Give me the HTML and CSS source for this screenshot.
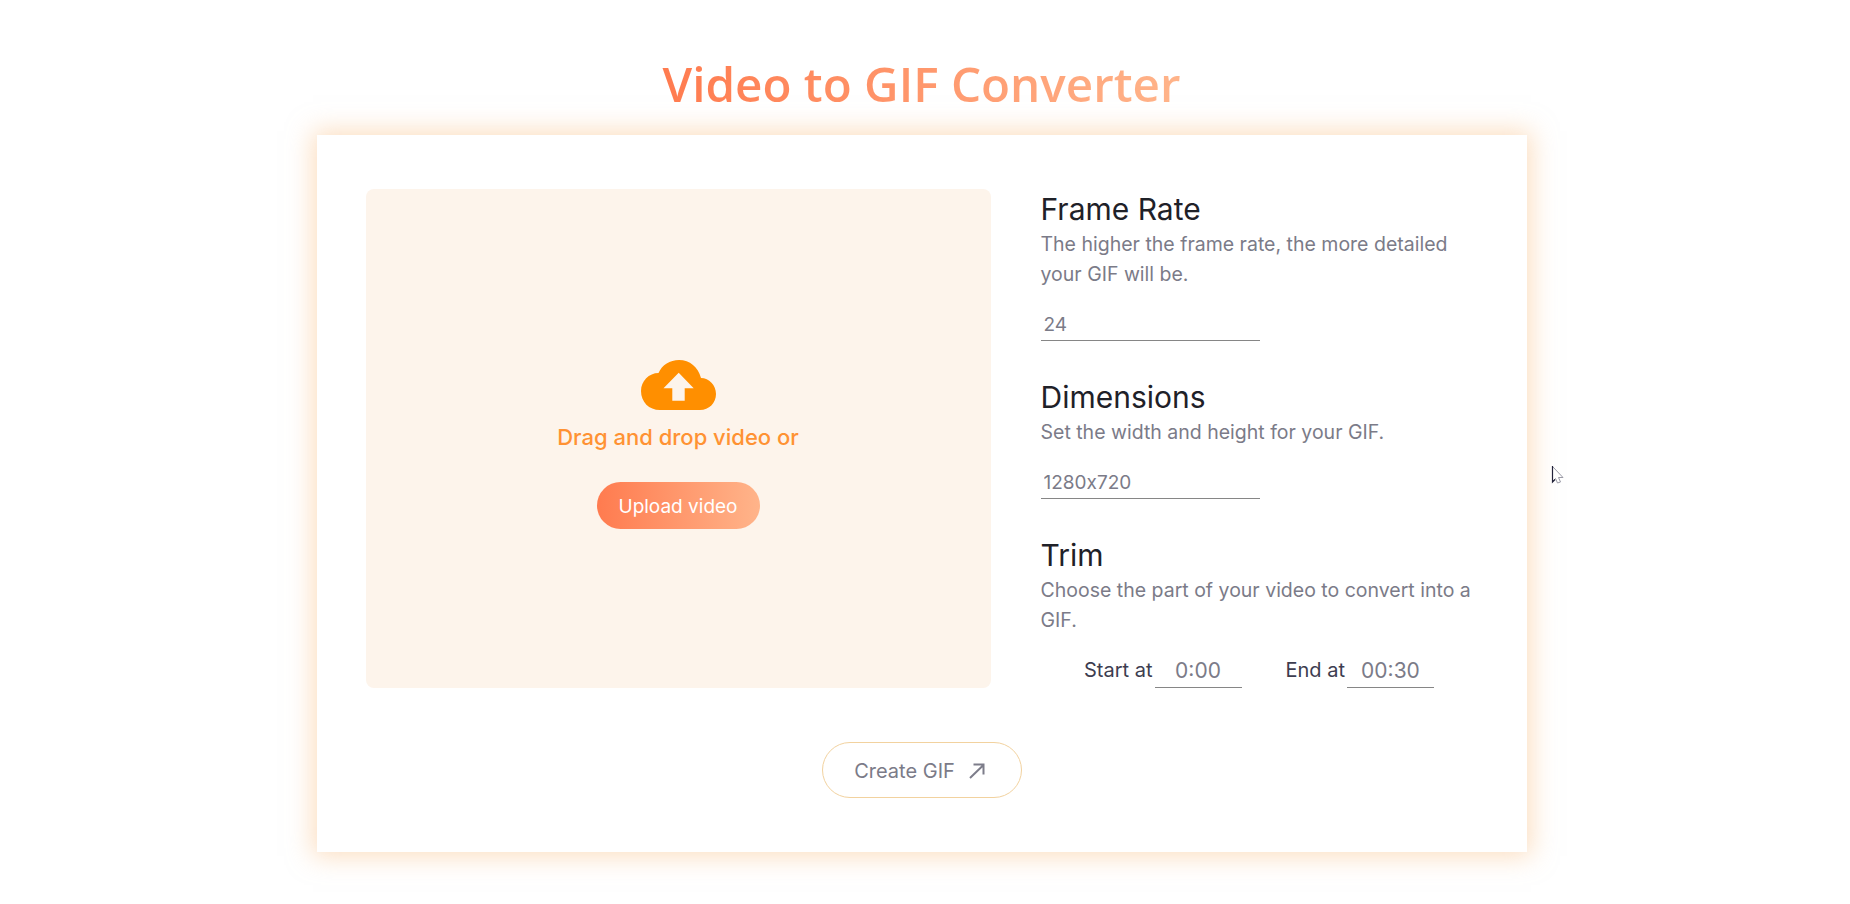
FILE: index.html
```html
<!DOCTYPE html>
<html lang="en">
<head>
    <meta charset="UTF-8">
    <title>Video to GIF Converter</title>

    <link rel="stylesheet" href="styles.css">
</head>
<body>
    <h1 class="title"><span>Video to GIF Converter</span></h1>

    <main class="card">
        <div class="columns">
            <div class="dropzone">
                <svg class="cloud" width="75" height="50" viewBox="0 0 75 50">
                    <path fill="#ff8f00" d="M19 50C8 50 0 42 0 31 0 21 8 13 17.500 13 21 5 29 0 38 0 49 0 57 7 60 18 68 18 75 25 75 34 75 43 68 50 59 50Z"/>
                    <path fill="#fdf4eb" d="M37.700 12.700 52.700 28.300H43.700V40.700H31.300V28.300H22.500Z"/>
                </svg>
                <p class="drop-text">Drag and drop video or</p>
                <button class="upload" type="button">Upload video</button>
            </div>

            <form class="settings">
                <section class="setting">
                    <h2>Frame Rate</h2>
                    <p>The higher the frame rate, the more detailed your GIF will be.</p>
                    <input class="field" type="text" placeholder="24">
                </section>
                <section class="setting">
                    <h2>Dimensions</h2>
                    <p>Set the width and height for your GIF.</p>
                    <input class="field" type="text" placeholder="1280x720">
                </section>
                <section class="setting">
                    <h2>Trim</h2>
                    <p>Choose the part of your video to convert into a GIF.</p>
                    <div class="trim">
                        <label>Start at<input class="time" type="text" placeholder="0:00"></label>
                        <label>End at<input class="time" type="text" placeholder="00:30"></label>
                    </div>
                </section>
            </form>
        </div>

        <button class="create" type="button">
            Create GIF
            <svg width="16" height="16" viewBox="0 0 16 16" fill="none" stroke="#7d7d8a" stroke-width="2">
                <path d="M1 15 14.500 2M4.500 1.500H14.500V11.500"/>
            </svg>
        </button>
    </main>

    <svg class="cursor" width="13" height="19" viewBox="0 0 13 19">
        <path fill="#fff" stroke="#9a9aa6" stroke-width="1" d="M1.500 1.500 12 12.500H7.500L9.500 17 6.500 18 4.500 13.500 1.500 16.500Z"/>
        <path fill="none" stroke="#22223a" stroke-width="1.200" d="M1.500 1V17L4 14.500"/>
    </svg>
</body>
</html>
```

FILE: styles.css
```css
html, body {
    margin: 0;
}

body {
    background: #fff;
    height: 904px;
    padding-right: 7px;
    overflow: hidden;
    font-family: 'Inter', 'Noto Sans', sans-serif;
    font-feature-settings: 'calt' 0;
    color: #1f2128;
}

.title {
    margin: 0;
    padding-top: 51px;
    height: 135px;
    box-sizing: border-box;
    text-align: center;
    font-family: 'Open Sans', sans-serif;
    font-size: 47.6px;
    line-height: 65px;
    font-weight: 600;
}

.title span {
    background: linear-gradient(90deg, #ff7b4f, #ffb48a);
    -webkit-background-clip: text;
    background-clip: text;
    color: transparent;
}

.card {
    width: 1210px;
    height: 717px;
    box-sizing: border-box;
    margin: 0 auto;
    padding: 54px 49px 0;
    background: #fff;
    box-shadow: 0 0 24px 4px rgba(250, 190, 130, .5);
    display: flex;
    flex-direction: column;
    align-items: center;
}

.columns {
    display: flex;
    align-self: stretch;
    gap: 50px;
}

.dropzone {
    width: 625px;
    height: 499px;
    flex-shrink: 0;
    border-radius: 8px;
    background: #fdf4eb;
    display: flex;
    flex-direction: column;
    align-items: center;
    padding-top: 171px;
    box-sizing: border-box;
}

.drop-text {
    margin: 13px 0 0;
    font-size: 22px;
    line-height: 28px;
    font-weight: 500;
    color: #ff9233;
}

.upload {
    margin-top: 31px;
    width: 163px;
    height: 47px;
    padding: 2px 0 0;
    border: none;
    border-radius: 24px;
    background: linear-gradient(90deg, #ff7b4f, #ffb48a);
    color: #fff;
    font: 400 19px 'Inter', sans-serif;
}

.settings {
    flex-grow: 1;
}

.setting {
    margin-bottom: 36px;
}

.setting:last-child {
    margin-bottom: 0;
}

.setting h2 {
    margin: 0;
    font-size: 30px;
    line-height: 40px;
    font-weight: 400;
}

.setting p {
    margin: 0;
    font-size: 19.5px;
    line-height: 30px;
    color: #7b7b88;
}

.field {
    display: block;
    width: 219px;
    height: 36px;
    margin-top: 16px;
    box-sizing: border-box;
    padding: 3px 3px 0;
    border: none;
    border-bottom: 1px solid #868686;
    outline: none;
    background: none;
    font: 19px 'Inter', sans-serif;
    font-feature-settings: 'calt' 0;
}

input::placeholder {
    color: #7b7b88;
    opacity: 1;
}

.trim {
    display: flex;
    justify-content: center;
    gap: 44px;
    margin-top: 17px;
}

.trim label {
    display: flex;
    align-items: center;
    gap: 2px;
    font-size: 20px;
    color: #3d3d50;
}

.time {
    width: 87px;
    height: 36px;
    box-sizing: border-box;
    padding: 1px 0 0;
    border: none;
    border-bottom: 1px solid #868686;
    outline: none;
    background: none;
    text-align: center;
    font: 21px 'Inter', sans-serif;
}

.create {
    margin-top: 54px;
    width: 200px;
    height: 56px;
    padding: 1px 0 0;
    border: 1px solid #f2d29f;
    border-radius: 28px;
    background: #fff;
    color: #7b7b88;
    font: 400 20px 'Inter', sans-serif;
    display: flex;
    align-items: center;
    justify-content: center;
    gap: 14px;
}

.create svg {
    margin-right: 4px;
}

.cursor {
    position: absolute;
    left: 1551px;
    top: 465px;
}
```
